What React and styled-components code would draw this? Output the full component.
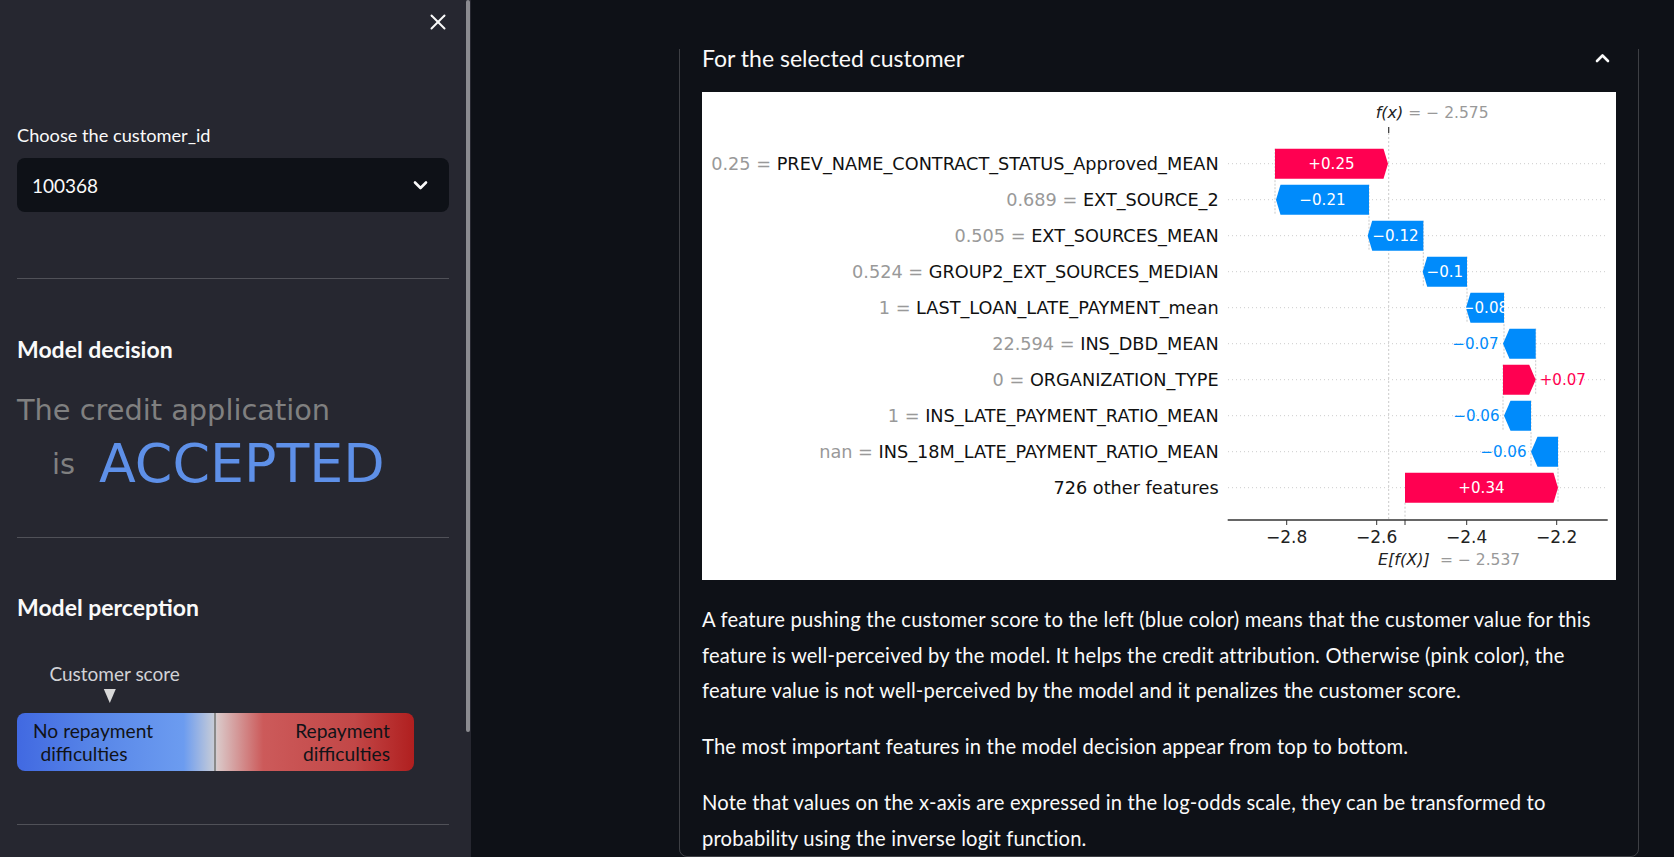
import React from 'react';
import styled, { createGlobalStyle } from 'styled-components';

const GlobalStyle = createGlobalStyle`
  html, body {
    margin: 0;
    padding: 0;
    height: 100%;
    overflow: hidden;
    background: #0e1117;
  }
  body {
    font-family: Lato, "Noto Sans", sans-serif;
    color: #fafafa;
  }
  * {
    box-sizing: border-box;
  }
`;

const AppShell = styled.div`
  display: flex;
  width: 100vw;
  height: 100vh;
  overflow: hidden;
`;

/* ---------- sidebar ---------- */

const Sidebar = styled.aside`
  position: relative;
  flex: 0 0 471px;
  height: 100%;
  background: #262730;
  padding: 0 22px 0 17px;
`;

const ScrollThumb = styled.div`
  position: absolute;
  top: 0;
  right: 1px;
  width: 4px;
  height: 732px;
  border-radius: 2px;
  background: #8b8b90;
`;

const CloseRow = styled.div`
  height: 44px;
  display: flex;
  align-items: center;
  justify-content: flex-end;
  padding-right: 3px;
`;

const IconButton = styled.button`
  display: flex;
  padding: 0;
  border: 0;
  background: none;
  color: #fafafa;
`;

const FieldLabel = styled.label`
  display: block;
  margin-top: 74.5px;
  font-size: 18.2px;
  line-height: 33px;
  color: #fafafa;
`;

const SelectBox = styled.div`
  margin-top: 6.5px;
  height: 54px;
  border-radius: 8px;
  background: #0e1117;
  display: flex;
  align-items: center;
  justify-content: space-between;
  padding: 0 21px 0 15px;
  font-size: 19px;
  color: #fafafa;
`;

const Divider = styled.hr`
  margin: ${(p) => p.$top}px 0 0;
  border: 0;
  height: 1px;
  background: rgba(250, 250, 250, 0.2);
`;

const SideHeading = styled.h3`
  margin: 55.6px 0 0;
  font-size: 23px;
  font-weight: 700;
  line-height: 28.8px;
  color: #fafafa;
`;

const DecisionLead = styled.div`
  margin-top: 29.4px;
  font-family: "DejaVu Sans", sans-serif;
  font-size: 28.8px;
  line-height: 34.3px;
  color: #808080;
  white-space: nowrap;
`;

const DecisionRow = styled.div`
  margin-top: 5px;
  height: 63.6px;
  display: flex;
  align-items: center;
  gap: 24px;
  padding-left: 35px;
  font-family: "DejaVu Sans", sans-serif;
`;

const DecisionIs = styled.span`
  font-size: 28.8px;
  color: #808080;
`;

const DecisionValue = styled.span`
  font-size: 53.8px;
  line-height: 1;
  color: #5e90e8;
`;

const Gauge = styled.div`
  margin-top: 38.6px;
  width: 397px;
`;

const MarkerTrack = styled.div`
  position: relative;
  height: 42px;
`;

const Marker = styled.div`
  position: absolute;
  top: 0;
  transform: translateX(-50%);
  display: flex;
  flex-direction: column;
  align-items: center;
`;

const MarkerLabel = styled.span`
  font-size: 19px;
  line-height: 26px;
  color: #d2d2d6;
  white-space: nowrap;
`;

const MarkerArrow = styled.span`
  margin: 2px 9px 0 0;
  width: 0;
  height: 0;
  border-left: 6.5px solid transparent;
  border-right: 6.5px solid transparent;
  border-top: 14px solid #d9d9d9;
`;

const ScoreBar = styled.div`
  margin-top: 10px;
  height: 58px;
  display: grid;
  grid-template-columns: 1fr 1fr;
  border-radius: 8px;
  overflow: hidden;
  background: linear-gradient(
    90deg,
    #4169e1 0%,
    #5886e8 20%,
    #6c9cf0 42%,
    #cbced6 50%,
    #dac8c8 50.5%,
    #cc5a5a 62%,
    #c24747 85%,
    #b01f1f 100%
  );
`;

const ScoreHalf = styled.div`
  display: flex;
  flex-direction: column;
  justify-content: center;
  align-items: ${(p) => (p.$right ? 'flex-end' : 'flex-start')};
  padding: ${(p) => (p.$right ? '0 24px 0 0' : '0 0 0 16px')};
  border-right: ${(p) => (p.$right ? '0' : '2px solid #8a8a8a')};
  font-size: 19.2px;
  line-height: 23px;
  color: #111318;
`;

const ScoreLine = styled.span`
  padding-left: ${(p) => p.$indent || 0}px;
  white-space: nowrap;
`;

/* ---------- main ---------- */

const Main = styled.main`
  position: relative;
  flex: 1;
  height: 100%;
  overflow: hidden;
  padding: 24px 0 0 208px;
`;

const TopHeader = styled.header`
  position: absolute;
  top: 0;
  left: 0;
  right: 0;
  height: 49px;
  background: #0e1117;
  z-index: 2;
`;

const Expander = styled.section`
  width: 960px;
  border: 1px solid rgba(250, 250, 250, 0.2);
  border-radius: 8px;
`;

const ExpanderSummary = styled.div`
  height: 62px;
  display: flex;
  align-items: center;
  justify-content: space-between;
  padding: 3px 28px 0 22px;
  font-size: 23px;
  color: #fafafa;
`;

const ExpanderBody = styled.div`
  padding: 5px 22px 0 22px;
`;

const ChartFrame = styled.div`
  width: 914px;
  height: 488px;
  background: #ffffff;

  svg {
    display: block;
  }
`;

const Paragraph = styled.p`
  margin: 20.5px 0 0;
  font-size: 20.2px;
  letter-spacing: 0.18px;
  line-height: 35.5px;
  color: #fafafa;

  &:first-of-type {
    margin-top: 22px;
  }
`;

/* ---------- chart ---------- */

const PINK = '#ff0051';
const BLUE = '#008bfb';
const ROW0 = 71.7;
const ROW_STEP = 36;
const LABEL_X = 516.7;
const FX_X = 686.7;
const BASE_X = 703;
const AXIS_Y = 428;
const TICKS = [
  { x: 584.7, t: '−2.8' },
  { x: 674.7, t: '−2.6' },
  { x: 764.7, t: '−2.4' },
  { x: 854.7, t: '−2.2' },
];

const ROWS = [
  { value: '0.25', name: 'PREV_NAME_CONTRACT_STATUS_Approved_MEAN', from: 573, to: 686, text: '+0.25', inside: true },
  { value: '0.689', name: 'EXT_SOURCE_2', from: 667, to: 574, text: '−0.21', inside: true },
  { value: '0.505', name: 'EXT_SOURCES_MEAN', from: 721.3, to: 665.7, text: '−0.12', inside: true },
  { value: '0.524', name: 'GROUP2_EXT_SOURCES_MEDIAN', from: 765, to: 720.7, text: '−0.1', inside: true },
  { value: '1', name: 'LAST_LOAN_LATE_PAYMENT_mean', from: 802, to: 764, text: '−0.08', inside: true },
  { value: '22.594', name: 'INS_DBD_MEAN', from: 833.7, to: 801, text: '−0.07', inside: false },
  { value: '0', name: 'ORGANIZATION_TYPE', from: 801, to: 833.7, text: '+0.07', inside: false },
  { value: '1', name: 'INS_LATE_PAYMENT_RATIO_MEAN', from: 829, to: 802, text: '−0.06', inside: false },
  { value: 'nan', name: 'INS_18M_LATE_PAYMENT_RATIO_MEAN', from: 856, to: 829, text: '−0.06', inside: false },
  { value: null, name: '726 other features', from: 703, to: 856, text: '+0.34', inside: true },
];

function barPoints(from, to, y, head) {
  const dir = to > from ? 1 : -1;
  const neck = to - dir * head;
  const top = y - 15;
  const bot = y + 15;
  return `${from},${top} ${neck},${top} ${to},${y} ${neck},${bot} ${from},${bot}`;
}

function Waterfall() {
  const rowY = (i) => ROW0 + i * ROW_STEP;
  return (
    <svg width="914" height="488" viewBox="0 0 914 488" fontFamily="'DejaVu Sans', sans-serif">
      {ROWS.map((r, i) => (
        <line key={`g${i}`} x1="526" x2="903" y1={rowY(i)} y2={rowY(i)} stroke="#cccccc" strokeWidth="1" strokeDasharray="1 3" />
      ))}
      {ROWS.slice(0, -1).map((r, i) => (
        <line key={`c${i}`} x1={r.from} x2={r.from} y1={rowY(i) - 15} y2={rowY(i + 1) + 15} stroke="#bbbbbb" strokeWidth="0.8" strokeDasharray="2 1.5" />
      ))}
      <line x1={FX_X} x2={FX_X} y1="41" y2={AXIS_Y} stroke="#bbbbbb" strokeWidth="0.8" strokeDasharray="2 2" />
      <line x1={BASE_X} x2={BASE_X} y1={rowY(9) + 15} y2={AXIS_Y} stroke="#bbbbbb" strokeWidth="0.8" strokeDasharray="2 2" />

      {ROWS.map((r, i) => {
        const y = rowY(i);
        const positive = r.to > r.from;
        const color = positive ? PINK : BLUE;
        const head = r.inside ? 4.5 : 6.5;
        return (
          <g key={`b${i}`}>
            <polygon points={barPoints(r.from, r.to, y, head)} fill={color} />
            {r.inside ? (
              <text x={(r.from + r.to) / 2} y={y + 5.5} fontSize="15.1" fill="#ffffff" textAnchor="middle">
                {r.text}
              </text>
            ) : (
              <text
                x={positive ? r.to + 4 : r.to - 4.5}
                y={y + 5.5}
                fontSize="15.1"
                fill={color}
                textAnchor={positive ? 'start' : 'end'}
              >
                {r.text}
              </text>
            )}
            <text x={LABEL_X} y={y + 6.45} fontSize="17.7" textAnchor="end" fill="#111111">
              {r.value !== null && <tspan fill="#999999">{`${r.value} = `}</tspan>}
              <tspan>{r.name}</tspan>
            </text>
          </g>
        );
      })}

      <line x1={FX_X} x2={FX_X} y1="35" y2="41" stroke="#333333" strokeWidth="1.2" />
      <text y="25.5" fontSize="16" fill="#222222">
        <tspan x="673.7" fontStyle="italic">f(x)</tspan>
        <tspan x="706.3" fill="#999999" fontSize="15.5">= − 2.575</tspan>
      </text>

      <line x1="525.7" x2="905.7" y1={AXIS_Y} y2={AXIS_Y} stroke="#333333" strokeWidth="1.4" />
      {TICKS.map((t) => (
        <g key={t.t}>
          <line x1={t.x} x2={t.x} y1={AXIS_Y} y2={AXIS_Y + 5} stroke="#333333" strokeWidth="1" />
          <text x={t.x} y="451" fontSize="17" fill="#222222" textAnchor="middle">
            {t.t}
          </text>
        </g>
      ))}
      <line x1={BASE_X} x2={BASE_X} y1={AXIS_Y} y2={AXIS_Y + 5} stroke="#333333" strokeWidth="1" />
      <text y="473" fontSize="16" fill="#222222">
        <tspan x="676" fontStyle="italic">E[f(X)]</tspan>
        <tspan x="738" fill="#999999" fontSize="15.5">= − 2.537</tspan>
      </text>
    </svg>
  );
}

/* ---------- icons ---------- */

const CloseIcon = () => (
  <svg width="16" height="16" viewBox="0 0 16 16" fill="none" stroke="currentColor" strokeWidth="2" strokeLinecap="round">
    <line x1="1.5" y1="1.5" x2="14.5" y2="14.5" />
    <line x1="14.5" y1="1.5" x2="1.5" y2="14.5" />
  </svg>
);

const ChevronDown = () => (
  <svg width="15" height="10" viewBox="0 0 15 10" fill="none" stroke="#fafafa" strokeWidth="2.6" strokeLinecap="round" strokeLinejoin="round">
    <polyline points="2,2.5 7.5,8 13,2.5" />
  </svg>
);

const ChevronUp = () => (
  <svg width="15" height="10" viewBox="0 0 15 10" fill="none" stroke="#fafafa" strokeWidth="2.6" strokeLinecap="round" strokeLinejoin="round">
    <polyline points="2,8 7.5,2.5 13,8" />
  </svg>
);

const SCORE = 0.246;

export default function App() {
  return (
    <>
      <GlobalStyle />
      <AppShell>
        <Sidebar>
          <ScrollThumb />
          <CloseRow>
            <IconButton aria-label="Close sidebar">
              <CloseIcon />
            </IconButton>
          </CloseRow>

          <FieldLabel>Choose the customer_id</FieldLabel>
          <SelectBox>
            <span>100368</span>
            <ChevronDown />
          </SelectBox>

          <Divider $top={66} />

          <SideHeading>Model decision</SideHeading>
          <DecisionLead>The credit application</DecisionLead>
          <DecisionRow>
            <DecisionIs>is</DecisionIs>
            <DecisionValue>ACCEPTED</DecisionValue>
          </DecisionRow>

          <Divider $top={41} />

          <SideHeading>Model perception</SideHeading>
          <Gauge>
            <MarkerTrack>
              <Marker style={{ left: `${SCORE * 100}%` }}>
                <MarkerLabel>Customer score</MarkerLabel>
                <MarkerArrow />
              </Marker>
            </MarkerTrack>
            <ScoreBar>
              <ScoreHalf>
                <ScoreLine>No repayment</ScoreLine>
                <ScoreLine $indent={7.5}>difficulties</ScoreLine>
              </ScoreHalf>
              <ScoreHalf $right>
                <ScoreLine>Repayment</ScoreLine>
                <ScoreLine>difficulties</ScoreLine>
              </ScoreHalf>
            </ScoreBar>
          </Gauge>

          <Divider $top={53} />
        </Sidebar>

        <Main>
          <TopHeader />
          <Expander>
            <ExpanderSummary>
              <span>For the selected customer</span>
              <ChevronUp />
            </ExpanderSummary>
            <ExpanderBody>
              <ChartFrame>
                <Waterfall />
              </ChartFrame>
              <Paragraph>
                A feature pushing the customer score to the left (blue color) means that the customer value for this
                feature is well-perceived by the model. It helps the credit attribution. Otherwise (pink color), the
                feature value is not well-perceived by the model and it penalizes the customer score.
              </Paragraph>
              <Paragraph>The most important features in the model decision appear from top to bottom.</Paragraph>
              <Paragraph>
                Note that values on the x-axis are expressed in the log-odds scale, they can be transformed to
                probability using the inverse logit function.
              </Paragraph>
            </ExpanderBody>
          </Expander>
        </Main>
      </AppShell>
    </>
  );
}
